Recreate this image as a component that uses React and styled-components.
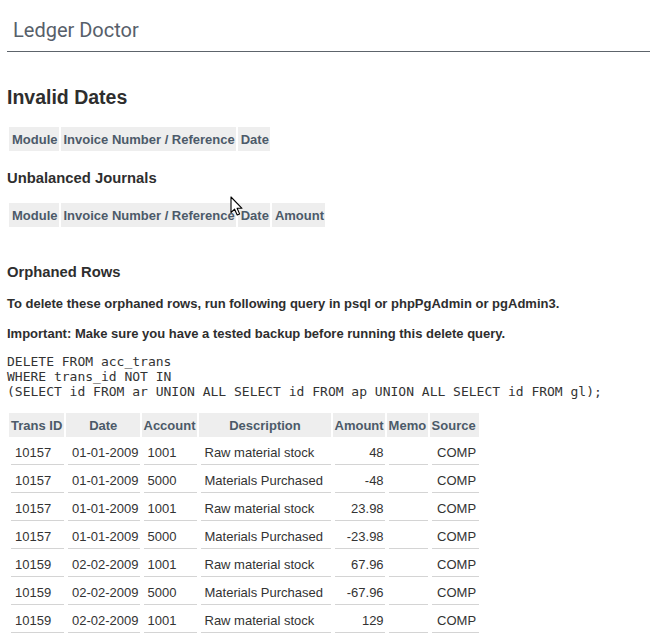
import React from 'react'
import styled, { createGlobalStyle } from 'styled-components'

const rows = [
  { id: '10157', date: '01-01-2009', account: '1001', desc: 'Raw material stock', amount: '48' },
  { id: '10157', date: '01-01-2009', account: '5000', desc: 'Materials Purchased', amount: '-48' },
  { id: '10157', date: '01-01-2009', account: '1001', desc: 'Raw material stock', amount: '23.98' },
  { id: '10157', date: '01-01-2009', account: '5000', desc: 'Materials Purchased', amount: '-23.98' },
  { id: '10159', date: '02-02-2009', account: '1001', desc: 'Raw material stock', amount: '67.96' },
  { id: '10159', date: '02-02-2009', account: '5000', desc: 'Materials Purchased', amount: '-67.96' },
  { id: '10159', date: '02-02-2009', account: '1001', desc: 'Raw material stock', amount: '129' },
]

// width of each column in the orphaned rows table
const cols = [
  { label: 'Trans ID', w: 55 },
  { label: 'Date', w: 71, align: 'center' },
  { label: 'Account', w: 54 },
  { label: 'Description', w: 132, align: 'center' },
  { label: 'Amount', w: 52 },
  { label: 'Memo', w: 41 },
  { label: 'Source', w: 49 },
]

const App = () => {
  return (
    <Page>
      <GlobalStyle />
      <Header>
        <Title>Ledger Doctor</Title>
      </Header>
      <Main>
        <PageTitle>Invalid Dates</PageTitle>
        <Table>
          <thead>
            <tr>
              <Th>Module</Th>
              <Th>Invoice Number / Reference</Th>
              <Th>Date</Th>
            </tr>
          </thead>
        </Table>

        <Section>Unbalanced Journals</Section>
        <Table $gap={14}>
          <thead>
            <tr>
              <Th>Module</Th>
              <Th>Invoice Number / Reference</Th>
              <Th>Date</Th>
              <Th>Amount</Th>
            </tr>
          </thead>
        </Table>

        <Section $gap={34}>Orphaned Rows</Section>
        <Note $gap={15}>To delete these orphaned rows, run following query in psql or phpPgAdmin or pgAdmin3.</Note>
        <Note>Important: Make sure you have a tested backup before running this delete query.</Note>
        <Code>{`DELETE FROM acc_trans
WHERE trans_id NOT IN
(SELECT id FROM ar UNION ALL SELECT id FROM ap UNION ALL SELECT id FROM gl);`}</Code>

        <Table $gap={12}>
          <thead>
            <tr>
              {cols.map(c => (
                <Th key={c.label} $w={c.w} $align={c.align}>{c.label}</Th>
              ))}
            </tr>
          </thead>
          <tbody>
            {rows.map((r, i) => (
              <tr key={i}>
                <Td>{r.id}</Td>
                <Td>{r.date}</Td>
                <Td>{r.account}</Td>
                <Td>{r.desc}</Td>
                <Td $align="right">{r.amount}</Td>
                <Td></Td>
                <Td $align="center">COMP</Td>
              </tr>
            ))}
          </tbody>
        </Table>
      </Main>

      <Cursor width="14" height="21" viewBox="0 0 14 21">
        <path d="M1 1 L1 16.5 L4.6 13.2 L7.2 19 L9.6 17.9 L7.1 12.3 L12 12.3 Z" fill="#fff" stroke="#000" strokeWidth="1.1" strokeLinejoin="round" />
      </Cursor>
    </Page>
  )
}

export default App

const GlobalStyle = createGlobalStyle`
  body {
    margin: 0;
    background: #fff;
    font-family: "Liberation Sans", Arial, sans-serif;
    color: #333;
  }
`

const Page = styled.div`
  position: relative;
  width: 652px;
  height: 641px;
  overflow: hidden;
  padding: 0 2px 0 7px;
  box-sizing: border-box;
`

const Header = styled.div`
  height: 52px;
  padding: 19px 0 0 6px;
  box-sizing: border-box;
  border-bottom: 1px solid #5d646b;
`

const Title = styled.div`
  font-family: Roboto, "Liberation Sans", sans-serif;
  font-size: 20px;
  line-height: 22px;
  color: #57606a;
  white-space: nowrap;
`

const Main = styled.div`
  display: flex;
  flex-direction: column;
  align-items: flex-start;
`

const PageTitle = styled.h2`
  margin: 33px 0 0;
  font-size: 19.5px;
  line-height: 24px;
  font-weight: bold;
  color: #2e2e2e;
  white-space: nowrap;
`

const Section = styled.h3`
  margin: ${p => p.$gap || 16}px 0 0;
  font-size: 14.8px;
  line-height: 18px;
  font-weight: bold;
  color: #2e2e2e;
  white-space: nowrap;
`

const Note = styled.p`
  margin: ${p => p.$gap || 14}px 0 0;
  font-size: 13px;
  line-height: 16px;
  font-weight: bold;
  color: #2e2e2e;
  white-space: nowrap;
`

const Code = styled.pre`
  margin: 12px 0 0;
  font-family: "DejaVu Sans Mono", monospace;
  font-size: 13px;
  line-height: 15px;
  color: #333;
`

const Table = styled.table`
  margin-top: ${p => p.$gap || 16}px;
  border-spacing: 2px;
  border-collapse: separate;
  font-size: 13px;
`

const Th = styled.th`
  box-sizing: border-box;
  width: ${p => p.$w ? `${p.$w}px` : 'auto'};
  height: 24px;
  padding: ${p => p.$w ? '0 1px 0 2px' : '0 1px 0 3px'};
  background: #eeeeee;
  color: #4c5a69;
  font-weight: bold;
  text-align: ${p => p.$align || 'left'};
  white-space: nowrap;
`

const Td = styled.td`
  height: 26px;
  padding: 0 1px 0 6px;
  box-sizing: border-box;
  color: #333;
  white-space: nowrap;
  text-align: ${p => p.$align || 'left'};
  background: linear-gradient(#d4d4d4, #d4d4d4) no-repeat 2px 100% / calc(100% - 2px) 1px;
`

const Cursor = styled.svg`
  position: absolute;
  left: 230px;
  top: 196px;
`
